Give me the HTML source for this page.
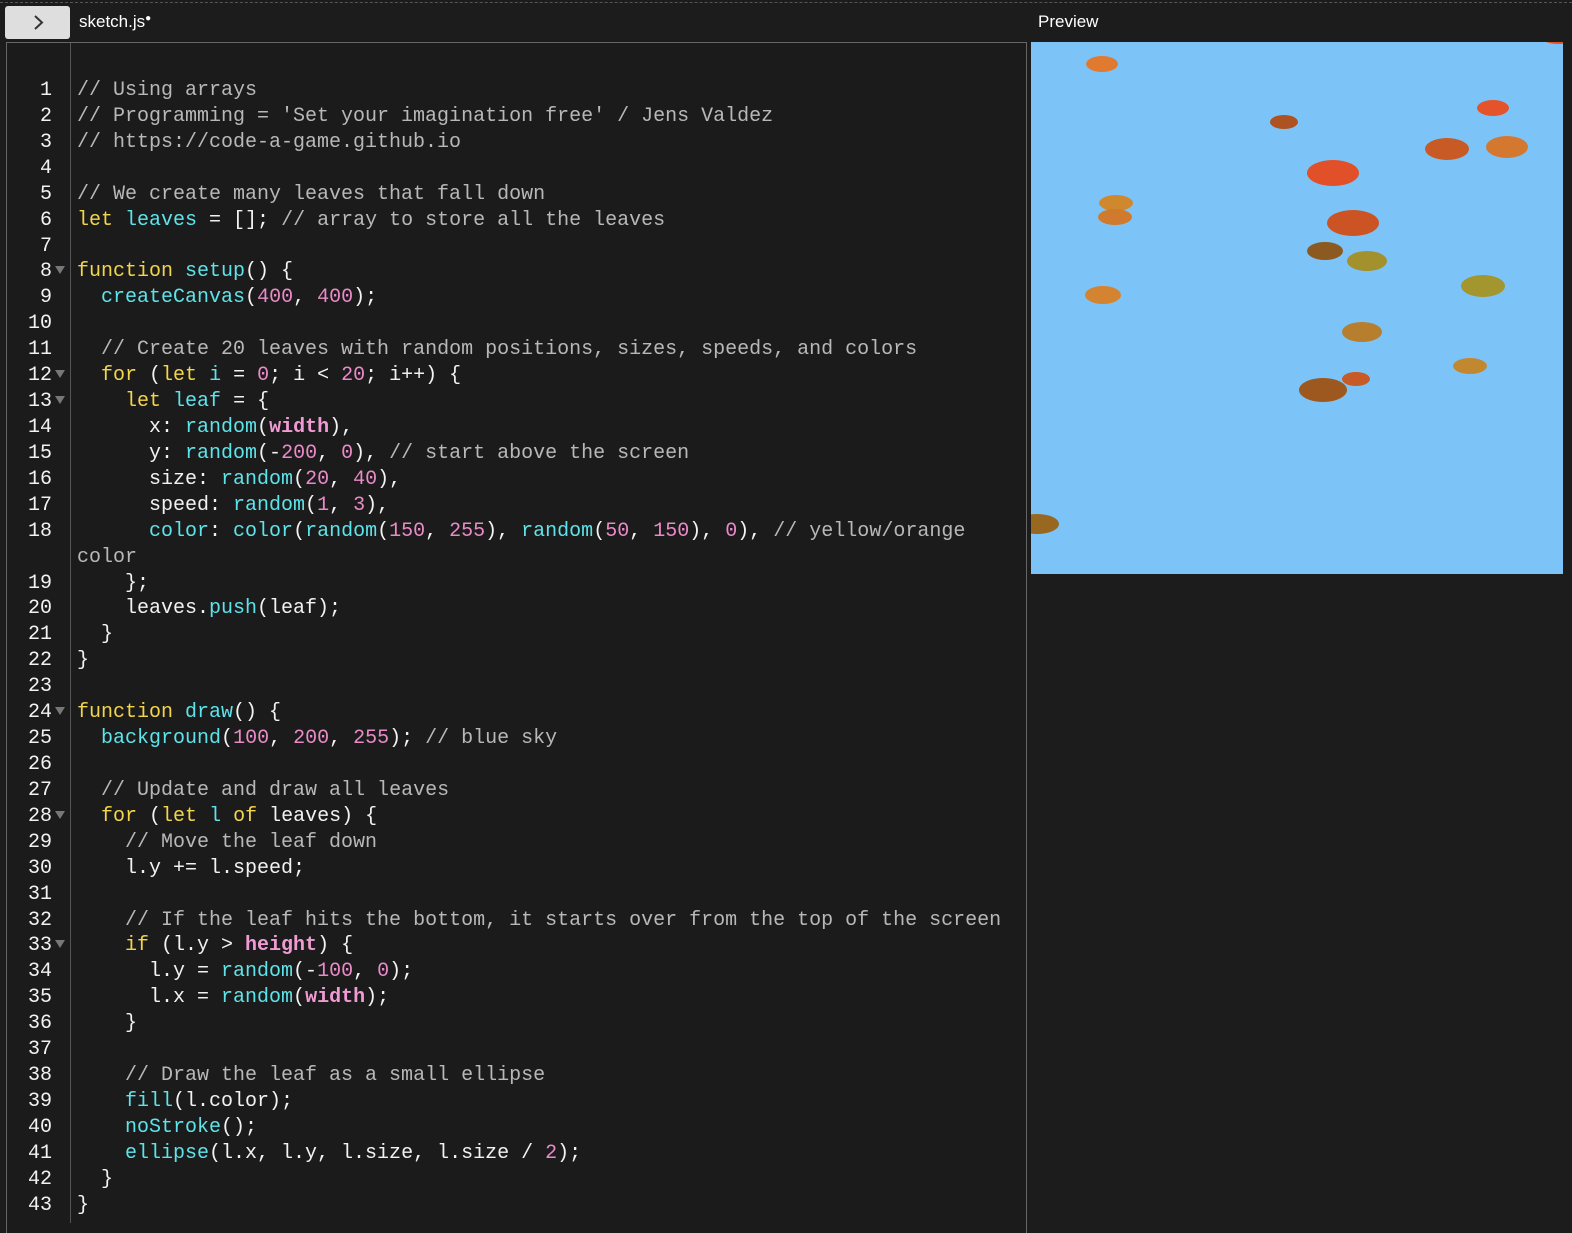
<!DOCTYPE html>
<html><head><meta charset="utf-8"><style>
body{margin:0;width:1572px;height:1220px;background:#1c1c1c;overflow:hidden;position:relative;font-family:"Liberation Sans",sans-serif}
.dash{position:absolute;left:0;top:2px;width:1572px;border-top:1px dashed #555}
.btn{position:absolute;left:5px;top:6px;width:65px;height:33px;background:#dedede;border-radius:3px}
.tab{position:absolute;left:79px;top:12px;color:#fff;font-size:17px}
.prev{position:absolute;left:1038px;top:12px;color:#fff;font-size:17px}
.ed{position:absolute;left:6px;top:42px;width:1019px;height:1190px;border:1px solid #666;border-bottom:none;background:#1b1b1b}
.gut{position:absolute;left:70px;top:43px;height:1180px;border-left:1px solid #555}
pre{margin:0;position:absolute;top:78px;font-family:"Liberation Mono",monospace;font-size:20px;line-height:25.92px;color:#f2f2f2}
.num{left:0;width:52px;text-align:right}
.code{left:77px}
.k{color:#f2d54a}.f{color:#5de4ea}.n{color:#e88bc6}.c{color:#b8b8b8}.b{color:#f09bd3;font-weight:bold}
.tri{position:absolute;left:55px;width:0;height:0;border-left:5px solid transparent;border-right:5px solid transparent;border-top:8px solid #777}
.cv{position:absolute;left:1031px;top:42px;width:532px;height:532px;background:#7cc4f8;overflow:hidden}
.e{position:absolute;border-radius:50%}
</style></head><body>
<div class="dash"></div>
<div class="btn"><svg width="65" height="33"><path d="M30 10 L37 16.5 L30 23" fill="none" stroke="#333" stroke-width="2"/></svg></div>
<div class="tab">sketch.js<span style="font-size:10px;vertical-align:6px">●</span></div>
<div class="prev">Preview</div>
<div class="ed"></div>
<div class="gut"></div>
<pre class="num">1
2
3
4
5
6
7
8
9
10
11
12
13
14
15
16
17
18

19
20
21
22
23
24
25
26
27
28
29
30
31
32
33
34
35
36
37
38
39
40
41
42
43</pre>
<div class="tri" style="top:266px"></div>
<div class="tri" style="top:370px"></div>
<div class="tri" style="top:396px"></div>
<div class="tri" style="top:707px"></div>
<div class="tri" style="top:811px"></div>
<div class="tri" style="top:940px"></div>
<pre class="code"><span class="c">// Using arrays</span>
<span class="c">// Programming = 'Set your imagination free' / Jens Valdez</span>
<span class="c">// https://code-a-game.github.io</span>

<span class="c">// We create many leaves that fall down</span>
<span class="k">let</span> <span class="f">leaves</span> = []; <span class="c">// array to store all the leaves</span>

<span class="k">function</span> <span class="f">setup</span>() {
  <span class="f">createCanvas</span>(<span class="n">400</span>, <span class="n">400</span>);

  <span class="c">// Create 20 leaves with random positions, sizes, speeds, and colors</span>
  <span class="k">for</span> (<span class="k">let</span> <span class="f">i</span> = <span class="n">0</span>; i &lt; <span class="n">20</span>; i++) {
    <span class="k">let</span> <span class="f">leaf</span> = {
      x: <span class="f">random</span>(<span class="b">width</span>),
      y: <span class="f">random</span>(-<span class="n">200</span>, <span class="n">0</span>), <span class="c">// start above the screen</span>
      size: <span class="f">random</span>(<span class="n">20</span>, <span class="n">40</span>),
      speed: <span class="f">random</span>(<span class="n">1</span>, <span class="n">3</span>),
      <span class="f">color</span>: <span class="f">color</span>(<span class="f">random</span>(<span class="n">150</span>, <span class="n">255</span>), <span class="f">random</span>(<span class="n">50</span>, <span class="n">150</span>), <span class="n">0</span>), <span class="c">// yellow/orange</span>
<span class="c">color</span>
    };
    leaves.<span class="f">push</span>(leaf);
  }
}

<span class="k">function</span> <span class="f">draw</span>() {
  <span class="f">background</span>(<span class="n">100</span>, <span class="n">200</span>, <span class="n">255</span>); <span class="c">// blue sky</span>

  <span class="c">// Update and draw all leaves</span>
  <span class="k">for</span> (<span class="k">let</span> <span class="f">l</span> <span class="k">of</span> leaves) {
    <span class="c">// Move the leaf down</span>
    l.y += l.speed;

    <span class="c">// If the leaf hits the bottom, it starts over from the top of the screen</span>
    <span class="k">if</span> (l.y &gt; <span class="b">height</span>) {
      l.y = <span class="f">random</span>(-<span class="n">100</span>, <span class="n">0</span>);
      l.x = <span class="f">random</span>(<span class="b">width</span>);
    }

    <span class="c">// Draw the leaf as a small ellipse</span>
    <span class="f">fill</span>(l.color);
    <span class="f">noStroke</span>();
    <span class="f">ellipse</span>(l.x, l.y, l.size, l.size / <span class="n">2</span>);
  }
}</pre>
<div class="cv">
<div class="e" style="left:55px;top:14px;width:32px;height:16px;background:#e07a30"></div>
<div class="e" style="left:239px;top:73px;width:28px;height:14px;background:#ad5220"></div>
<div class="e" style="left:446px;top:58px;width:32px;height:16px;background:#e5532a"></div>
<div class="e" style="left:394px;top:96px;width:44px;height:22px;background:#c85a25"></div>
<div class="e" style="left:455px;top:94px;width:42px;height:22px;background:#d4782f"></div>
<div class="e" style="left:276px;top:118px;width:52px;height:26px;background:#e15028"></div>
<div class="e" style="left:68px;top:153px;width:34px;height:16px;background:#d0882f"></div>
<div class="e" style="left:67px;top:167px;width:34px;height:16px;background:#cf7a2c"></div>
<div class="e" style="left:296px;top:168px;width:52px;height:26px;background:#cc5424"></div>
<div class="e" style="left:276px;top:200px;width:36px;height:18px;background:#8c5a20"></div>
<div class="e" style="left:316px;top:209px;width:40px;height:20px;background:#a3912e"></div>
<div class="e" style="left:54px;top:244px;width:36px;height:18px;background:#d48430"></div>
<div class="e" style="left:430px;top:233px;width:44px;height:22px;background:#a3962e"></div>
<div class="e" style="left:311px;top:280px;width:40px;height:20px;background:#b77e2e"></div>
<div class="e" style="left:422px;top:316px;width:34px;height:16px;background:#c2882f"></div>
<div class="e" style="left:311px;top:330px;width:28px;height:14px;background:#c85a25"></div>
<div class="e" style="left:268px;top:336px;width:48px;height:24px;background:#9c581f"></div>
<div class="e" style="left:-16px;top:472px;width:44px;height:20px;background:#986820"></div>
<div class="e" style="left:512px;top:-8px;width:30px;height:10px;background:#e5532a"></div>
</div>
</body></html>
